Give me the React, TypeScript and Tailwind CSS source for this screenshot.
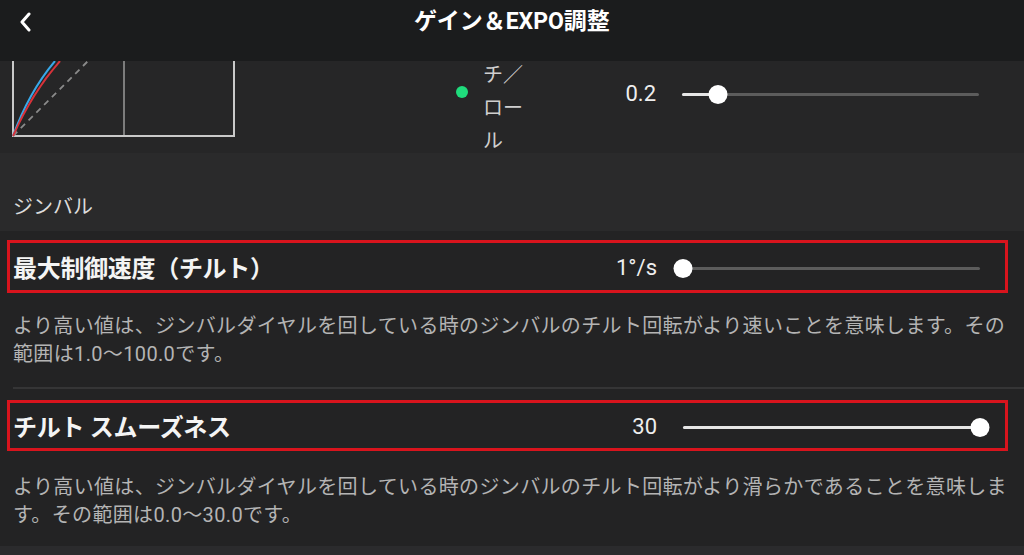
import React from "react";

const FONT = "font-['Roboto','Noto_Sans_CJK_JP',sans-serif]";

function Slider({ pct }: { pct: number }) {
  return (
    <div className="relative w-[297px] h-[20px] flex items-center">
      <div className="absolute left-0 right-0 h-[3px] bg-[#5c5c5c] rounded-full" />
      <div className="absolute left-0 h-[3px] bg-[#e6e6e6] rounded-full" style={{ width: `${pct}%` }} />
      <div
        className="absolute w-[19px] h-[19px] rounded-full bg-white -translate-x-1/2"
        style={{ left: `${pct}%` }}
      />
    </div>
  );
}

function ValueSlider({ value, pct }: { value: string; pct: number }) {
  return (
    <div className="flex items-center">
      <div className="w-[100px] text-right text-[22px] text-[#eeeeee] leading-none">{value}</div>
      <div className="w-[26px]" />
      <Slider pct={pct} />
    </div>
  );
}

function RedRow({ title, value, pct, h }: { title: string; value: string; pct: number; h: string }) {
  return (
    <div className={`ml-[7px] w-[1001px] border-[3px] border-[#d8141d] flex items-center justify-between pl-[3px] pr-[25px] ${h}`}>
      <div className="text-[24px] font-bold text-[#f4f4f4] leading-none pt-[5px] tracking-[-0.3px]">{title}</div>
      <div className="pt-[3px]">
        <ValueSlider value={value} pct={pct} />
      </div>
    </div>
  );
}

export default function App() {
  return (
    <div className={`${FONT} w-[1024px] h-[555px] overflow-hidden bg-[#232324]`}>
      {/* Header */}
      <div className="h-[61px] bg-[#1b1c1d] relative">
        <div className="h-[44px] flex items-center justify-center relative">
          <svg className="absolute left-[18px] top-[12px]" width="16" height="20" viewBox="0 0 16 20">
            <polyline points="11,2 4,10 11,18" fill="none" stroke="#ffffff" strokeWidth="3" strokeLinecap="round" strokeLinejoin="round" />
          </svg>
          <div className="text-[23px] font-bold text-white">ゲイン＆EXPO調整</div>
        </div>
      </div>

      {/* Top section (scrolled) */}
      <div className="h-[92px] bg-[#262627] flex overflow-hidden">
        <svg className="ml-[12px] shrink-0" width="224" height="78" viewBox="0 0 224 78">
          <line x1="1" y1="0" x2="1" y2="76" stroke="#c9c9c9" strokeWidth="2" />
          <line x1="112" y1="0" x2="112" y2="76" stroke="#9a9a9a" strokeWidth="1.5" />
          <line x1="222" y1="0" x2="222" y2="76" stroke="#c9c9c9" strokeWidth="2" />
          <line x1="0" y1="75" x2="223" y2="75" stroke="#c9c9c9" strokeWidth="2" />
          <line x1="1" y1="75" x2="76" y2="0" stroke="#8a8a8a" strokeWidth="1.8" strokeDasharray="6 5" />
          <path d="M1 75 C 10 50, 22 25, 43 0" fill="none" stroke="#38a8e8" strokeWidth="2" />
          <path d="M1 75 C 12 50, 26 25, 48 0" fill="none" stroke="#d8323a" strokeWidth="2" />
        </svg>
        <div className="ml-[220px] flex items-start">
          <div className="mt-[25px] w-[12px] h-[12px] rounded-full bg-[#1fdc7c]" />
          <div className="ml-[15px] w-[44px] mt-[-2px] text-[20px] leading-[33px] text-[#cfcfcf] break-all">
            チ／ロール
          </div>
        </div>
        <div className="ml-[29px] mt-[22px]">
          <ValueSlider value="0.2" pct={12} />
        </div>
      </div>

      {/* Gimbal header band */}
      <div className="h-[78px] bg-[#2a2a2b] flex items-end pl-[13px] pb-[14px]">
        <div className="text-[20px] text-[#dcdcdc] leading-none">ジンバル</div>
      </div>

      <div className="h-[9px]" />

      <RedRow title="最大制御速度（チルト）" value="1°/s" pct={0} h="h-[53px]" />

      <div className="pl-[13px] pr-[10px] pt-[19px] text-[20px] tracking-[0.35px] leading-[28px] text-[#b4b4b4]">
        より高い値は、ジンバルダイヤルを回している時のジンバルのチルト回転がより速いことを意味します。その範囲は1.0～100.0です。
      </div>

      <div className="mt-[19px] ml-[13px] h-[2px] bg-[#353536]" />

      <div className="h-[11px]" />

      <RedRow title="チルト スムーズネス" value="30" pct={100} h="h-[51px]" />

      <div className="pl-[13px] pr-[10px] pt-[22px] text-[20px] tracking-[0.35px] leading-[28px] text-[#b4b4b4]">
        より高い値は、ジンバルダイヤルを回している時のジンバルのチルト回転がより滑らかであることを意味します。その範囲は0.0～30.0です。
      </div>

      <div className="mt-[17px] h-[20px] bg-[#2b2b2d]" />
    </div>
  );
}
